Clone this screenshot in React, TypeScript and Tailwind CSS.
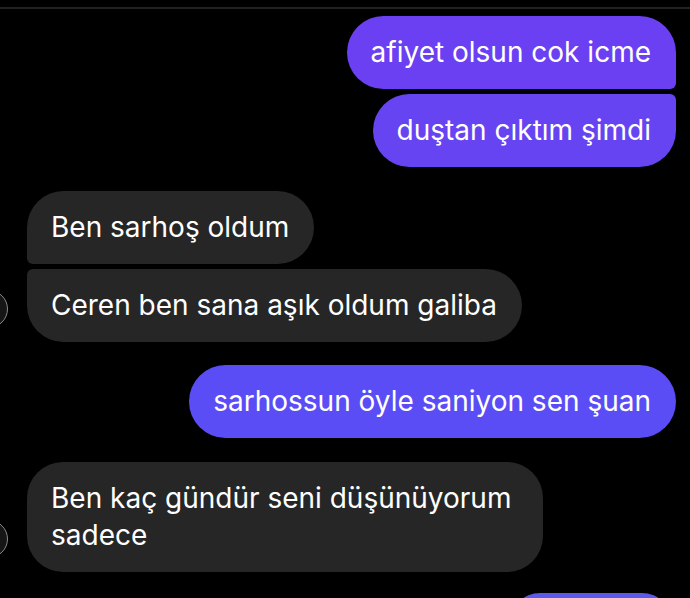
import React from 'react'

type Msg = {
  text: string
  mine: boolean
  color?: string
  corner: string
  gap: string
  avatar?: boolean
}

const MESSAGES: Msg[] = [
  { text: 'afiyet olsun cok icme', mine: true, color: 'bg-[#6a40f2]', corner: 'rounded-[37px] rounded-br-[6px]', gap: 'mt-[7px]' },
  { text: 'duştan çıktım şimdi', mine: true, color: 'bg-[#6644f2]', corner: 'rounded-[37px] rounded-tr-[6px]', gap: 'mt-[5px]' },
  { text: 'Ben sarhoş oldum', mine: false, corner: 'rounded-[37px] rounded-bl-[6px]', gap: 'mt-[24px]' },
  { text: 'Ceren ben sana aşık oldum galiba', mine: false, corner: 'rounded-[37px] rounded-tl-[6px]', gap: 'mt-[5px]', avatar: true },
  { text: 'sarhossun öyle saniyon sen şuan', mine: true, color: 'bg-[#5b4df5]', corner: 'rounded-[37px]', gap: 'mt-[23px]' },
  { text: 'Ben kaç gündür seni düşünüyorum sadece', mine: false, corner: 'rounded-[36px]', gap: 'mt-[24px]', avatar: true },
]

function Avatar() {
  return (
    <div className="absolute -left-[30px] bottom-[14px] h-[38px] w-[38px] rounded-full border border-[#8a8a8a] bg-[#161616]" />
  )
}

export default function App() {
  return (
    <div
      className="h-[598px] w-[690px] overflow-hidden bg-black text-white"
      style={{ fontFamily: 'Inter, "Noto Sans", sans-serif' }}
    >
      <div className="pt-[7px]">
        <div className="h-[2px] bg-[#222222]" />
      </div>

      <div className="flex flex-col">
        {MESSAGES.map((m, i) => (
          <div key={i} className={`relative flex ${m.gap} ${m.mine ? 'justify-end pr-[14px]' : 'justify-start pl-[27px]'}`}>
            {m.avatar && <Avatar />}
            <div
              className={`${m.corner} ${m.mine ? m.color : 'bg-[#262626]'} py-[18px] pl-[24px] pr-[25px] text-[28px] leading-[37px] ${
                m.text.length > 34 ? 'max-w-[516px]' : ''
              }`}
            >
              {m.text}
            </div>
          </div>
        ))}

        {/* next outgoing bubble, cut off by the bottom edge */}
        <div className="mt-[21px] flex justify-end pr-[18px]">
          <div className="h-[40px] w-[162px] rounded-t-[30px] bg-[#5c5aea]" />
        </div>
      </div>
    </div>
  )
}
